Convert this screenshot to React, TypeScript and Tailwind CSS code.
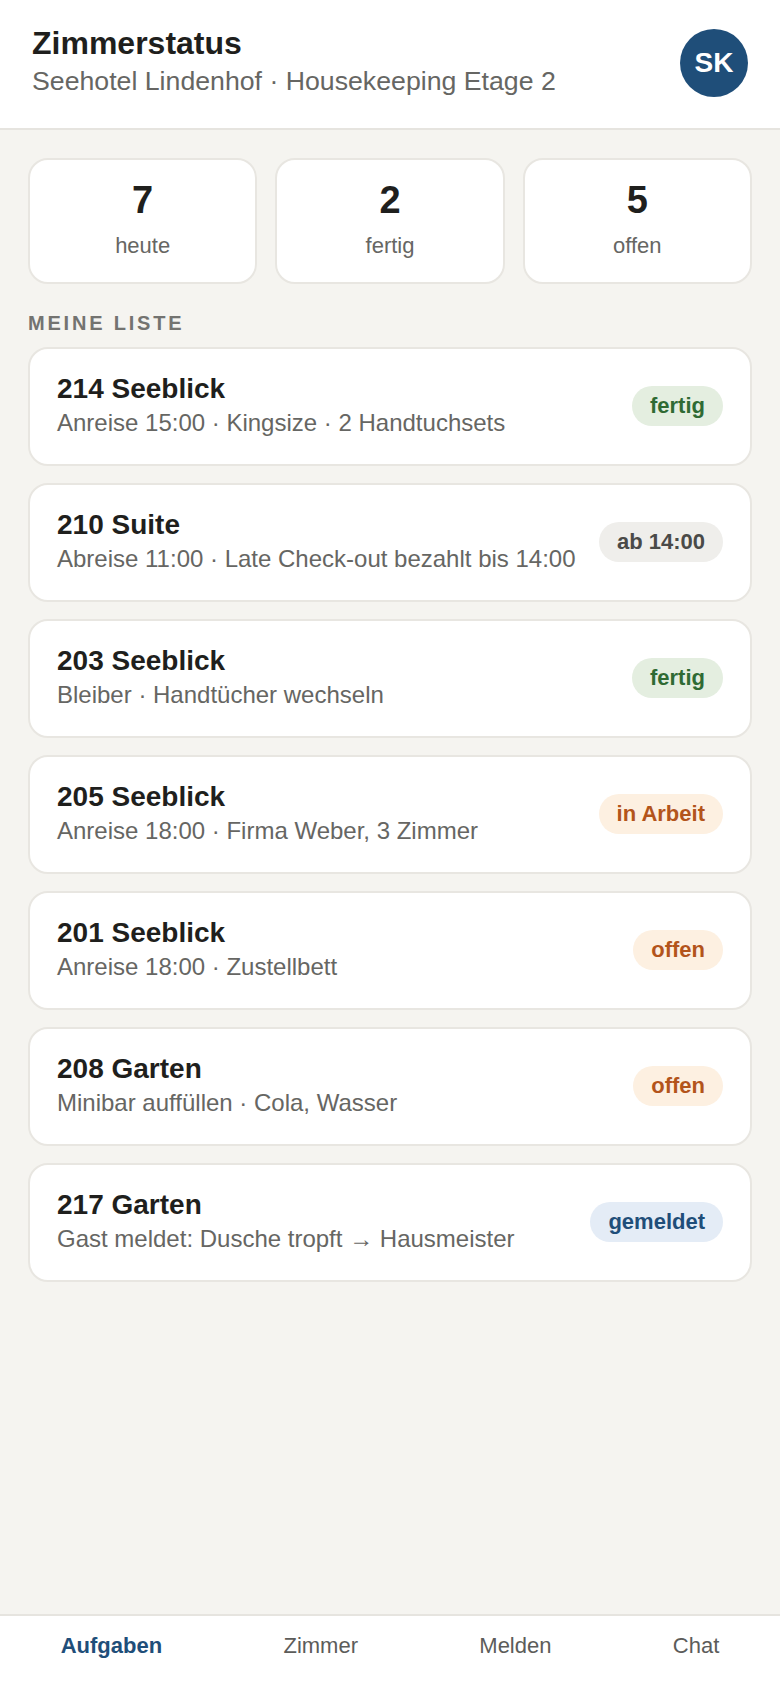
import React from "react";

type Status = "fertig" | "ab 14:00" | "in Arbeit" | "offen" | "gemeldet";

const badgeStyles: Record<Status, string> = {
  fertig: "bg-[#e4eee0] text-[#2f6a33]",
  "ab 14:00": "bg-[#efeeeb] text-[#4a4a48]",
  "in Arbeit": "bg-[#fdf0e1] text-[#b3541b]",
  offen: "bg-[#fdf0e1] text-[#b3541b]",
  gemeldet: "bg-[#e4ecf6] text-[#1f4e79]",
};

const rooms: { title: string; sub: string; status: Status }[] = [
  { title: "214 Seeblick", sub: "Anreise 15:00 · Kingsize · 2 Handtuchsets", status: "fertig" },
  { title: "210 Suite", sub: "Abreise 11:00 · Late Check-out bezahlt bis 14:00", status: "ab 14:00" },
  { title: "203 Seeblick", sub: "Bleiber · Handtücher wechseln", status: "fertig" },
  { title: "205 Seeblick", sub: "Anreise 18:00 · Firma Weber, 3 Zimmer", status: "in Arbeit" },
  { title: "201 Seeblick", sub: "Anreise 18:00 · Zustellbett", status: "offen" },
  { title: "208 Garten", sub: "Minibar auffüllen · Cola, Wasser", status: "offen" },
  { title: "217 Garten", sub: "Gast meldet: Dusche tropft → Hausmeister", status: "gemeldet" },
];

const stats = [
  { n: "7", label: "heute" },
  { n: "2", label: "fertig" },
  { n: "5", label: "offen" },
];

export default function App() {
  return (
    <div
      className="min-h-screen flex flex-col bg-[#f5f4f0] text-[#1f1f1d]"
      style={{ fontFamily: '"Liberation Sans", Arial, sans-serif' }}
    >
      <header className="bg-white border-b-2 border-[#e6e4df] px-8 pt-6 pb-[31px] flex items-center justify-between">
        <div>
          <h1 className="text-[32px] leading-[38px] font-bold text-[#1f1f1d]">Zimmerstatus</h1>
          <p className="mt-[3px] text-[26.7px] leading-[32px] text-[#666663]">
            Seehotel Lindenhof · Housekeeping Etage 2
          </p>
        </div>
        <div className="w-[68px] h-[68px] mt-[4px] rounded-full bg-[#1f4e79] text-white flex items-center justify-center text-[28px] font-bold">
          SK
        </div>
      </header>

      <main className="flex-1 px-[28px] pt-[28px] pb-6">
        <div className="grid grid-cols-3 gap-[18px]">
          {stats.map((s) => (
            <div
              key={s.label}
              className="bg-white border-2 border-[#e8e6e1] rounded-[20px] pt-[17px] pb-[23px] flex flex-col items-center"
            >
              <div className="text-[38px] leading-[46px] font-bold text-[#1f1f1d]">{s.n}</div>
              <div className="mt-[10px] text-[22px] leading-[26px] text-[#666663]">{s.label}</div>
            </div>
          ))}
        </div>

        <h2 className="mt-[27px] mb-[12px] text-[20px] leading-[24px] font-bold tracking-[0.14em] text-[#737370]">
          MEINE LISTE
        </h2>

        <div className="flex flex-col gap-[17px]">
          {rooms.map((r) => (
            <div
              key={r.title}
              className="bg-white border-2 border-[#e8e6e1] rounded-[20px] px-[27px] pt-[23px] pb-[26px] flex items-center justify-between"
            >
              <div>
                <div className="text-[28px] leading-[34px] font-bold text-[#1f1f1d]">{r.title}</div>
                <div className="mt-[2px] text-[24px] leading-[30px] text-[#666663]">{r.sub}</div>
              </div>
              <span
                className={`shrink-0 mt-[2px] rounded-full px-[18px] py-[7px] text-[22px] leading-[26px] font-bold ${badgeStyles[r.status]}`}
              >
                {r.status}
              </span>
            </div>
          ))}
        </div>
      </main>

      <nav className="bg-white border-t-2 border-[#e6e4df] h-[74px] pt-4 flex justify-around items-start">
        <span className="text-[22px] leading-[28px] font-bold text-[#1f4e79]">Aufgaben</span>
        <span className="text-[22px] leading-[28px] text-[#5c5c5a]">Zimmer</span>
        <span className="text-[22px] leading-[28px] text-[#5c5c5a]">Melden</span>
        <span className="text-[22px] leading-[28px] text-[#5c5c5a]">Chat</span>
      </nav>
    </div>
  );
}
